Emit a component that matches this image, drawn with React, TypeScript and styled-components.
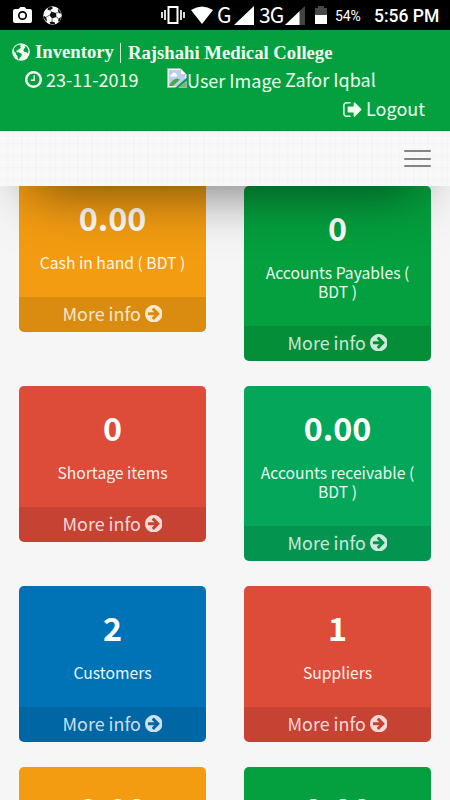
import React from 'react';
import styled, { createGlobalStyle } from 'styled-components';

const GlobalStyle = createGlobalStyle`
  * { box-sizing: border-box; }
  html, body { margin: 0; padding: 0; background: #f6f6f6; }
  body { overflow: hidden; font-family: "Noto Sans CJK SC", "Noto Sans", sans-serif; }
`;

const Screen = styled.div`
  width: 450px;
  height: 800px;
  display: flex;
  flex-direction: column;
  overflow: hidden;
  background: #f6f6f6;
`;

const StatusBar = styled.div`
  height: 30px;
  flex: none;
  display: flex;
  align-items: center;
  background: #000;
  color: #fff;
  font-family: Roboto, sans-serif;
`;

const StatusIcon = styled.svg<{ $gap?: number }>`
  flex: none;
  display: block;
  margin-left: ${(p) => p.$gap ?? 0}px;
`;

const NetworkLabel = styled.span<{ $width: number; $gap: number }>`
  width: ${(p) => p.$width}px;
  margin-left: ${(p) => p.$gap}px;
  font-family: "Noto Sans CJK SC", sans-serif;
  font-size: 21px;
  line-height: 28px;
  padding-bottom: 2px;
  letter-spacing: -1px;
  white-space: nowrap;
`;

const BatteryLevel = styled.span`
  width: 27px;
  margin-left: 8px;
  font-size: 14px;
  letter-spacing: -0.1px;
  line-height: 30px;
  padding-top: 1px;
`;

const Clock = styled.span`
  margin-left: 12px;
  font-size: 17.5px;
  font-weight: 500;
  line-height: 30px;
  padding-top: 1px;
  white-space: nowrap;
`;

const FixedTop = styled.div`
  position: relative;
  z-index: 1;
  flex: none;
  box-shadow: 0 36px 56px -30px rgba(0, 0, 0, 0.52);
`;

const Header = styled.header`
  height: 101px;
  background: #049f3e;
  box-shadow: inset 0 -1px 0 #06933a;
  color: #f0fff0;
  padding-top: 8px;
`;

const Brand = styled.div`
  height: 28px;
  display: flex;
  align-items: center;
  padding-left: 12px;
  font: bold 18.7px/28px "Liberation Serif", serif;
  white-space: nowrap;
`;

const BrandName = styled.span`
  width: 80px;
  margin-left: 5px;
`;

const Divider = styled.i`
  width: 1px;
  height: 20px;
  margin: 2px 7px 0 5px;
  background: #d8f5dc;
`;

const Organisation = styled.span`
  padding-top: 2px;
`;

const HeaderRow = styled.div<{ $end?: boolean }>`
  height: ${(p) => (p.$end ? 30 : 28)}px;
  display: flex;
  align-items: center;
  justify-content: ${(p) => (p.$end ? 'flex-end' : 'flex-start')};
  padding: 0 25px;
  font-size: 18px;
  line-height: 28px;
  white-space: nowrap;
`;

const RowText = styled.span`
  padding-bottom: 3px;
`;

const DateText = styled(RowText)`
  width: 92px;
  margin-left: 4px;
`;

const Avatar = styled.span`
  display: flex;
  align-items: center;
  width: 114px;
  margin: 0 4px 0 29px;
`;

const LogoutText = styled(RowText)`
  margin-left: 4px;
`;

const NavBar = styled.nav`
  height: 55px;
  display: flex;
  align-items: center;
  justify-content: flex-end;
  padding-right: 19px;
  background-color: #f8f8f8;
  background-image:
    repeating-linear-gradient(90deg, transparent 0 7px, rgba(0, 0, 0, 0.012) 7px 9px, transparent 9px 13px, rgba(0, 0, 0, 0.01) 13px 14px),
    repeating-linear-gradient(0deg, transparent 0 6px, rgba(0, 0, 0, 0.012) 6px 7px, transparent 7px 11px, rgba(255, 255, 255, 0.5) 11px 12px);
`;

const MenuButton = styled.button`
  width: 27px;
  height: 17px;
  display: flex;
  flex-direction: column;
  justify-content: space-between;
  padding: 0;
  border: 0;
  background: none;
`;

const MenuLine = styled.span`
  height: 2px;
  border-radius: 1px;
  background: #858585;
`;

const Board = styled.main`
  flex: 1;
  min-height: 0;
  display: flex;
  flex-direction: column;
  gap: 25px;
  padding: 0 19px;
`;

const CardRow = styled.div`
  flex: none;
  display: grid;
  grid-template-columns: 187px 187px;
  column-gap: 38px;
  align-items: start;
`;

const Card = styled.section<{ $color: string; $raised?: boolean }>`
  display: flex;
  flex-direction: column;
  margin-top: ${(p) => (p.$raised ? -10 : 0)}px;
  border-radius: 5px;
  overflow: hidden;
  text-align: center;
  color: #fff;
  background: ${(p) => p.$color};
`;

const CardBody = styled.div`
  padding: 17px 12px 25px;
`;

const Value = styled.h3`
  margin: 0;
  font-size: 32.3px;
  font-weight: 700;
  line-height: 48px;
`;

const Label = styled.p`
  min-height: 19px;
  margin: 12px 0 0;
  font-size: 15.7px;
  line-height: 19px;
  opacity: 0.92;
`;

const MoreInfo = styled.a`
  height: 35px;
  display: flex;
  align-items: center;
  justify-content: center;
  gap: 4px;
  background: rgba(0, 0, 0, 0.1);
  color: rgba(255, 255, 255, 0.8);
  font-size: 17.9px;
  line-height: 33px;
  padding-bottom: 2px;
`;

const GlyphSvg = styled.svg<{ $lift?: number }>`
  flex: none;
  display: block;
  fill: currentColor;
  margin-bottom: ${(p) => p.$lift ?? 0}px;
`;

const ring =
  'q0 209-103 385.5t-279.5 279.5-385.5 103-385.5-103-279.5-279.5-103-385.5 103-385.5 279.5-279.5 385.5-103 385.5 103 279.5 279.5 103 385.5z';

const glyphs = {
  arrow:
    'M1413 896q0-27-18-45l-91-91-362-362q-18-18-45-18t-45 18l-91 91q-18 18-18 45t18 45l189 189h-502q-26 0-45 19t-19 45v128q0 26 19 45t45 19h502l-189 189q-19 19-19 45t19 45l91 91q18 18 45 18t45-18l362-362 91-91q18-18 18-45zm251 0' + ring,
  clock:
    'M1024 544v448q0 14-9 23t-23 9h-320q-14 0-23-9t-9-23v-64q0-14 9-23t23-9h224v-352q0-14 9-23t23-9h64q14 0 23 9t9 23zm416 352q0-148-73-273t-198-198-273-73-273 73-198 198-73 273 73 273 198 198 273 73 273-73 198-198 73-273zm224 0' + ring,
  signOut:
    'M704 1440q0 4 1 20t.5 26.5-3 23.5-10 19.5-20.5 6.5h-320q-119 0-203.5-84.5t-84.5-203.5v-704q0-119 84.5-203.5t203.5-84.5h320q13 0 22.5 9.5t9.5 22.5q0 4 1 20t.5 26.5-3 23.5-10 19.5-20.5 6.5h-320q-66 0-113 47t-47 113v704q0 66 47 113t113 47h312l11.5 1 11.5 3 8 5.5 7 9 2 13.5zm928-544q0 26-19 45l-544 544q-19 19-45 19t-45-19-19-45v-288h-448q-26 0-45-19t-19-45v-384q0-26 19-45t45-19h448v-288q0-26 19-45t45-19 45 19l544 544q19 19 19 45z',
};

function Glyph({ name, box = '128 128 1536 1536', width = 17, height = 17, lift }: {
  name: keyof typeof glyphs;
  box?: string;
  width?: number;
  height?: number;
  lift?: number;
}) {
  return (
    <GlyphSvg $lift={lift} width={width} height={height} viewBox={box}>
      <path d={glyphs[name]} />
    </GlyphSvg>
  );
}

function Globe() {
  return (
    <GlyphSvg $lift={1} width="18" height="18" viewBox="0 0 18 18">
      <circle cx="9" cy="9" r="8.8" />
      <path fill="#049f3e" d="M3.4 3.4 5.6 1.9 8 1.8 8.7 2.6 8 3.6 9 4.6 7.9 5.7 6.6 6.1 6.1 7.4 5 7.2 4.2 8.3 5 9.2 6.6 9.3 8.4 10.2 10 11.3 9.2 13.5 7.7 14.7 7 16.4 5.9 15.9 5.6 13.4 4.2 11.6 3.6 9.8 1.8 8.3 2 5.6z" />
      <path fill="#049f3e" d="m12.4 2.4 2.5 1.7 1.6 3.2-.5 3.2-1.7-1.6-1.5.2-1.5-1.7.6-1.7 1.4-1-.1-1z" />
    </GlyphSvg>
  );
}

function BrokenImage() {
  return (
    <GlyphSvg $lift={5} width="20" height="20" viewBox="0 0 20 20">
      <path fill="#f2f7f6" stroke="#a8b7ad" d="M.5.5h13l6 6v13H.5z" />
      <path fill="#bccff0" d="M2 2h11v5h5v11H2z" />
      <path fill="#fff" d="M3 8.5q0-2 2-2 .6-2.5 2.8-1.8Q10 5.2 10 8.5z" />
      <path fill="#4ba747" d="M2 18q3-7 8-7.5l3 1L6 18z" />
      <path fill="#fff" stroke="#a8b7ad" strokeWidth=".7" d="M13.5.5v6h6z" />
      <path fill="#049f3e" d="M20 9.5 8 20h3l9-7.5z" />
      <path fill="#75b775" d="m12 19 7-5.5v5.5z" />
    </GlyphSvg>
  );
}

const stats = [
  [
    { value: '0.00', label: 'Cash in hand ( BDT )', color: '#f39c12', raised: true },
    { value: '0', label: 'Accounts Payables ( BDT )', color: '#049f3e' },
  ],
  [
    { value: '0', label: 'Shortage items', color: '#dd4b39' },
    { value: '0.00', label: 'Accounts receivable ( BDT )', color: '#04a65a' },
  ],
  [
    { value: '2', label: 'Customers', color: '#0073b7' },
    { value: '1', label: 'Suppliers', color: '#dd4b39' },
  ],
  [
    { value: '0.00', label: '', color: '#f39c12' },
    { value: '0.00', label: '', color: '#049f3e' },
  ],
];

export default function App() {
  return (
    <Screen>
      <GlobalStyle />
      <StatusBar>
        <StatusIcon $gap={13} width="19" height="18" viewBox="0 0 19 18">
          <path fill="#fff" d="M2 3h3.5l2-2h4l2 2H17q2 0 2 2v10q0 2-2 2H2q-2 0-2-2V5q0-2 2-2z" />
          <circle cx="9.5" cy="9.5" r="3.7" fill="#fff" stroke="#000" strokeWidth="1.7" />
        </StatusIcon>
        <StatusIcon $gap={11} width="19" height="19" viewBox="0 0 19 19">
          <circle cx="9.5" cy="9.5" r="9.2" fill="#fff" />
          <path d="m8.4 5.8 4.7 1.1.3 4.2-4.3 1.5-2.7-3.4zM5 1.5l4-.8 1 1.5-3 2-2.5-.3zM15.5 3l2.3 3.2-.3 1.7-2-1.3-.8-2.8zM18.3 11l-1.5 4-1.7.4.4-2.8zM12 18.2l-4.3.1-1.2-2 2.5-.8 3 .9zM3.7 15.7.8 12l.4-2.3 1.800 1.600.9 2.500z" fill="#111" />
          <path d="M8.4 5.8 7 4.2M13.1 6.9l2.4-.3M13.4 11.1l2.1 1.5M9.1 12.6v3M6.4 9.2 3 11.3" stroke="#333" strokeWidth=".7" />
        </StatusIcon>
        <StatusIcon $gap={99} width="24" height="18" viewBox="0 0 24 18">
          <path fill="none" stroke="#fff" strokeWidth="2" d="M7.5 1h9v16h-9z" />
          <path stroke="#fff" strokeWidth="1.7" d="M4 4v10M20 4v10M1 6v6M23 6v6" />
        </StatusIcon>
        <StatusIcon $gap={6} width="22" height="18" viewBox="0 0 22 18">
          <path fill="#fff" d="M0 4q11-7 22 0L11 18z" />
        </StatusIcon>
        <NetworkLabel $gap={4} $width={13}>G</NetworkLabel>
        <StatusIcon $gap={4} width="20" height="19" viewBox="0 0 20 19">
          <path fill="#fff" d="M20 0v19H0z" />
        </StatusIcon>
        <NetworkLabel $gap={5} $width={24}>3G</NetworkLabel>
        <StatusIcon $gap={2} width="20" height="19" viewBox="0 0 20 19">
          <path fill="#444" d="M20 0v19H0z" />
          <path fill="#fff" d="M14.5 5.2V19H0z" />
        </StatusIcon>
        <StatusIcon $gap={10} width="12" height="18" viewBox="0 0 12 18">
          <path fill="#484848" d="M3 0h6v2h3v7H0V2h3z" />
          <path fill="#fff" d="M0 9h12v9H0z" />
        </StatusIcon>
        <BatteryLevel>54%</BatteryLevel>
        <Clock>5:56 PM</Clock>
      </StatusBar>
      <FixedTop>
        <Header>
          <Brand>
            <Globe />
            <BrandName>Inventory</BrandName>
            <Divider />
            <Organisation>Rajshahi Medical College</Organisation>
          </Brand>
          <HeaderRow>
            <Glyph name="clock" lift={2} />
            <DateText>23-11-2019</DateText>
            <Avatar><BrokenImage />User Image</Avatar>
            <RowText>Zafor Iqbal</RowText>
          </HeaderRow>
          <HeaderRow $end>
            <Glyph name="signOut" box="64 256 1600 1280" width={19} height={15} />
            <LogoutText>Logout</LogoutText>
          </HeaderRow>
        </Header>
        <NavBar>
          <MenuButton aria-label="Menu"><MenuLine /><MenuLine /><MenuLine /></MenuButton>
        </NavBar>
      </FixedTop>
      <Board>
        {stats.map((row, i) => (
          <CardRow key={i}>
            {row.map((card, j) => (
              <Card key={j} $color={card.color} $raised={card.raised}>
                <CardBody>
                  <Value>{card.value}</Value>
                  <Label>{card.label}</Label>
                </CardBody>
                <MoreInfo>More info <Glyph name="arrow" width={17.5} height={17.5} /></MoreInfo>
              </Card>
            ))}
          </CardRow>
        ))}
      </Board>
    </Screen>
  );
}
